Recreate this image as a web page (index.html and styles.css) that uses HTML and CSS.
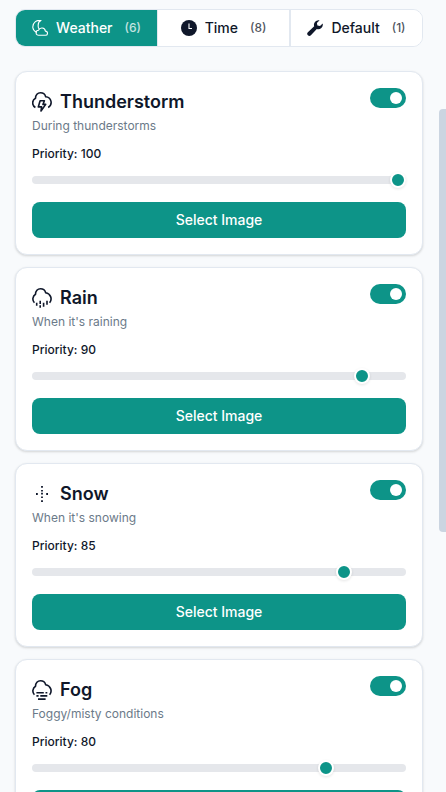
FILE: index.html
```html
<!DOCTYPE html>
<html lang="en">
<head>
<meta charset="utf-8">
<title>Backgrounds</title>
<link rel="stylesheet" href="styles.css">
</head>
<body>
<main class="page">
  <nav class="tabs">
    <button class="tab active">
      <svg class="tab-icon outline" viewBox="0 0 16 16"><path d="M4.4 12.2A6 6 0 0 1 .8 7.5 6.6 6.6 0 0 1 9 .6 4.8 4.8 0 0 0 6.2 5.2Q6 7.400 7 8.800"/><path d="M6.700 15.300a2.500 2.500 0 0 1-.2-5 3.600 3.600 0 0 1 6.900.8 2.100 2.100 0 0 1 0 4.200z"/></svg>
      <span>Weather</span><span class="count">(6)</span>
    </button>
    <button class="tab time">
      <svg class="tab-icon" viewBox="0 0 16 16"><circle cx="8" cy="8" r="8" fill="currentColor"/><path d="M8 3.500V8.500h3" fill="none" stroke="#fff" stroke-width="1.1"/></svg>
      <span>Time</span><span class="count">(8)</span>
    </button>
    <button class="tab default">
      <svg class="tab-icon" viewBox="0 0 16 16"><path fill="currentColor" d="M15.700 3.500a4.600 4.600 0 0 1-5.900 5.400l-5.900 6.300a2 2 0 0 1-3-3l6.300-5.900A4.600 4.600 0 0 1 12.600.3L9.900 3l.5 2.600 2.600.5z"/></svg>
      <span>Default</span><span class="count">(1)</span>
    </button>
  </nav>

  <section class="card">
    <header class="head">
      <svg class="icon" viewBox="0 0 20 20"><path d="M3.400 15.500A5.200 5.200 0 0 1 3.500 6.300C3.500 3 5.600.8 8.500.8c2.600 0 4.500 1.600 5.200 3.900A5.800 5.800 0 0 1 16.200 15.500"/><path d="M8.100 8.800h4.300L11 12.400h2.700L9 19l.6-4.100H6.300z"/></svg>
      <h2>Thunderstorm</h2><span class="switch"></span>
    </header>
    <p class="desc">During thunderstorms</p>
    <p class="priority">Priority: 100</p>
    <input class="slider" type="range" min="0" max="100" value="100">
    <button class="select">Select Image</button>
  </section>

  <section class="card">
    <header class="head">
      <svg class="icon" viewBox="0 0 20 20"><path d="M2.400 14.800A5.500 5.500 0 0 1 3.500 6.300C3.500 3 5.600.8 8.500.8c2.600 0 4.500 1.600 5.200 3.900A6.200 6.200 0 0 1 17.600 14.800"/><path d="M4.700 14.800v3M8.200 12.800v3.200M8.200 17.200v2.600M11.600 14.800v4M15 12.800v4"/></svg>
      <h2>Rain</h2><span class="switch"></span>
    </header>
    <p class="desc">When it's raining</p>
    <p class="priority">Priority: 90</p>
    <input class="slider" type="range" min="0" max="100" value="90">
    <button class="select">Select Image</button>
  </section>

  <section class="card">
    <header class="head">
      <svg class="icon snow" viewBox="0 0 20 20"><path d="M9.100 2h1.800v1.800H9.100zM9.100 6h1.800v1.600H9.100zM9.100 8.800h1.800v1.800H9.100zM9.100 12.400h1.800v1.600H9.100zM9.100 16.200h1.800v1.800H9.100zM4 9.100h1.800v1.800H4zM14.200 9.100h1.800v1.800h-1.800z"/></svg>
      <h2>Snow</h2><span class="switch"></span>
    </header>
    <p class="desc">When it's snowing</p>
    <p class="priority">Priority: 85</p>
    <input class="slider" type="range" min="0" max="100" value="85">
    <button class="select">Select Image</button>
  </section>

  <section class="card">
    <header class="head">
      <svg class="icon" viewBox="0 0 20 20"><path d="M2.400 14.800A5.500 5.500 0 0 1 3.500 6.300C3.500 3 5.600.8 8.500.8c2.600 0 4.500 1.600 5.200 3.900A6.200 6.200 0 0 1 17.600 14.800"/><path d="M4.400 12.700h7.400M13.500 12.700h1.800M4.400 15.900h2.200M8.300 15.900h7M6 19.100h7.600"/></svg>
      <h2>Fog</h2><span class="switch"></span>
    </header>
    <p class="desc">Foggy/misty conditions</p>
    <p class="priority">Priority: 80</p>
    <input class="slider" type="range" min="0" max="100" value="80">
    <button class="select">Select Image</button>
  </section>
</main>
<div class="scroll-thumb"></div>
</body>
</html>
```
FILE: styles.css
```css
* { box-sizing: border-box; }

body {
  margin: 0;
  height: 792px;
  overflow: hidden;
  background: #f8fafc;
  color: #0f172a;
  font-family: Inter, "Liberation Sans", sans-serif;
}

button { border: 0; padding: 0; font-family: inherit; }
h2, p { margin: 0; }

.page {
  width: 408px;
  height: 792px;
  margin-left: 15px;
  padding-top: 9px;
  display: flex;
  flex-direction: column;
  gap: 12px;
  overflow: clip;
  overflow-clip-margin: 6px;
}

.tabs {
  height: 38px;
  flex: none;
  margin-bottom: 12px;
  display: grid;
  grid-template-columns: 141px 133px 132px;
  border: 1px solid #e2e8f0;
  border-radius: 10px;
  overflow: hidden;
  background: #fff;
}

.tab {
  display: flex;
  align-items: center;
  justify-content: center;
  gap: 8px;
  background: #fff;
  color: #0f172a;
  font-size: 14px;
  font-weight: 500;
  line-height: 20px;
}

.tab.active { background: #0d9488; color: #fff; }
.tab.time { border-left: 1px solid #e2e8f0; border-right: 1px solid #e2e8f0; }
.tab.default { border-left: 1px solid #e2e8f0; }
.tab-icon { width: 16px; height: 16px; }
.outline { fill: none; stroke: currentColor; stroke-width: 1.1; stroke-linejoin: round; stroke-linecap: round; }
.count { margin-left: 4px; font-size: 12px; opacity: .75; }

.card {
  height: 184px;
  flex: none;
  padding: 16px;
  border: 1px solid #e2e8f0;
  border-radius: 12px;
  background: #fff;
  box-shadow: 0 1px 3px rgba(0, 0, 0, .1), 0 1px 2px rgba(0, 0, 0, .06);
  display: flex;
  flex-direction: column;
}

.head { display: flex; height: 28px; gap: 8px; }

.icon {
  width: 20px;
  height: 20px;
  margin-top: 4px;
  fill: none;
  stroke: currentColor;
  stroke-width: 1.6;
  stroke-linejoin: round;
}

.snow { fill: currentColor; stroke: none; }

h2 { flex: 1; font-size: 18px; font-weight: 600; line-height: 28px; }

.switch {
  width: 36px;
  height: 20px;
  padding: 4px;
  border-radius: 10px;
  background: #0d9488;
  display: flex;
  justify-content: flex-end;
}

.switch::after {
  content: "";
  width: 12px;
  height: 12px;
  border-radius: 50%;
  background: #fff;
}

.desc { color: #6b7a89; font-size: 12px; line-height: 20px; }
.priority { margin-top: 8px; font-size: 12px; font-weight: 500; line-height: 20px; }

.slider {
  appearance: none;
  width: 100%;
  height: 8px;
  margin: 12px 0 18px;
  border-radius: 4px;
  background: #e5e7eb;
}

.slider::-webkit-slider-thumb {
  appearance: none;
  width: 16px;
  height: 16px;
  border: 2px solid #fff;
  border-radius: 50%;
  background: #0d9488;
  box-shadow: 0 1px 3px rgba(0, 0, 0, .1);
}

.select {
  height: 36px;
  padding-bottom: 2px;
  border-radius: 8px;
  background: #0d9488;
  color: #fff;
  font-size: 14px;
  font-weight: 500;
}

.scroll-thumb {
  position: absolute;
  right: 0;
  top: 109px;
  width: 7px;
  height: 423px;
  border-radius: 4px 0 0 4px;
  background: #cbd5e1;
}
```
